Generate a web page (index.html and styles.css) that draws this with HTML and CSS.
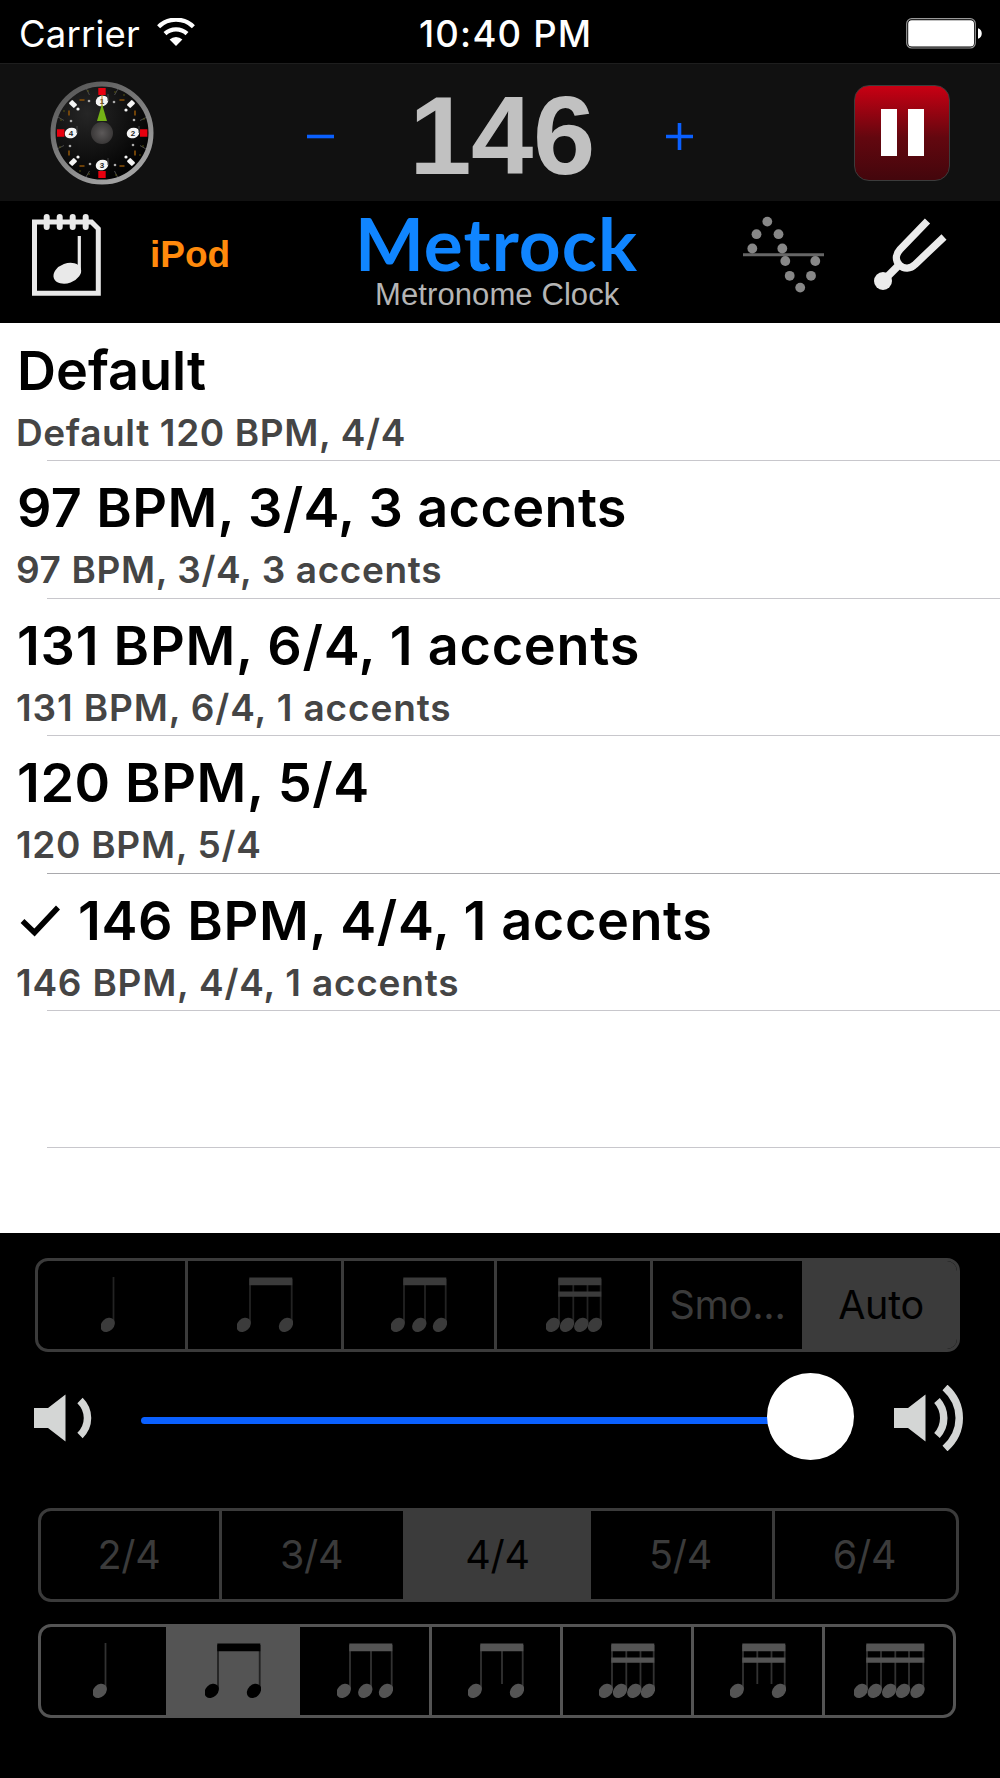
FILE: index.html
```html
<!DOCTYPE html>
<html lang="en">
<head>
    <meta charset="UTF-8">
    <meta name="viewport" content="width=device-width, initial-scale=1.0">
    <title>Metrock</title>
    <link rel="stylesheet" href="styles.css">
</head>
<body>
    <!-- shared note symbols -->
    <svg class="defs" width="0" height="0">
        <defs>
            <ellipse id="head" rx="8" ry="6.2" transform="rotate(-45)"/>
            <symbol id="note1" viewBox="0 0 14 56">
                <path class="stem" d="M12.5 0V46"/>
                <use href="#head" x="6.7" y="47.8"/>
            </symbol>
            <symbol id="note2" viewBox="0 0 56 56">
                <path class="stem" d="M13 2V46M54.7 2V46"/>
                <path d="M12.3 .5h43v7.8h-43z"/>
                <use href="#head" x="6.7" y="47.8"/><use href="#head" x="49" y="47.8"/>
            </symbol>
            <symbol id="note3" viewBox="0 0 56 56">
                <path class="stem" d="M13 2V46M34 2V46M54.7 2V46"/>
                <path d="M12.3 .5h43v7.8h-43z"/>
                <use href="#head" x="6.7" y="47.8"/><use href="#head" x="28.3" y="47.8"/><use href="#head" x="49" y="47.8"/>
            </symbol>
            <symbol id="note3rest" viewBox="0 0 56 56">
                <path class="stem" d="M13 2V46M34 2V41M54.7 2V46"/>
                <path d="M12.3 .5h43v7.8h-43z"/>
                <use href="#head" x="6.7" y="47.8"/><use href="#head" x="49" y="47.8"/>
            </symbol>
            <symbol id="note4" viewBox="0 0 56 56">
                <path class="stem" d="M13 2V46M27.3 2V46M41.5 2V46M54.7 2V46"/>
                <path d="M12.3 .5h43v7.8h-43zM12.3 14.6h43v5.2h-43z"/>
                <use href="#head" x="6.7" y="47.8"/><use href="#head" x="21" y="47.8"/><use href="#head" x="35.3" y="47.8"/><use href="#head" x="49" y="47.8"/>
            </symbol>
            <symbol id="note4rest" viewBox="0 0 56 56">
                <path class="stem" d="M13 2V46M27.3 2V41M41.5 2V41M54.7 2V46"/>
                <path d="M12.3 .5h43v7.8h-43zM12.3 14.6h43v5.2h-43z"/>
                <use href="#head" x="6.7" y="47.8"/><use href="#head" x="49" y="47.8"/>
            </symbol>
            <symbol id="note5" viewBox="0 0 71 56">
                <path class="stem" d="M13 2V46M27 2V46M41.3 2V46M55 2V46M69.3 2V46"/>
                <path d="M12.3 .5h58v7.8h-58zM12.3 14.6h58v5.2h-58z"/>
                <use href="#head" x="6.7" y="47.8"/><use href="#head" x="20.8" y="47.8"/><use href="#head" x="35.2" y="47.8"/><use href="#head" x="49" y="47.8"/><use href="#head" x="63.5" y="47.8"/>
            </symbol>
            <g id="minor">
                <path d="M12.5 -38l3.5 -6M-12.5 -38l-3 -6" stroke="#4a4a4a" stroke-width="1"/>
                <path d="M17.5 -33h5M-22.5 -33h5" stroke="#8a5208" stroke-width="1.6"/>
                <circle cx="12" cy="-31" r="1.3" fill="#aaa"/>
                <circle cx="-13" cy="-32" r="1.3" fill="#aaa"/>
                <circle cx="13" cy="-41" r=".8" fill="#5c5a10"/>
                <circle cx="-14" cy="-42" r=".8" fill="#5c5a10"/>
                <circle cx="22" cy="-38" r=".8" fill="#5c5a10"/>
            </g>
        </defs>
    </svg>

    <div class="status-bar">
        <span class="carrier">Carrier</span>
        <svg class="wifi" width="38" height="28" viewBox="0 0 38 28">
            <path d="M1.6 8.7a25 25 0 0 1 34.8 0M8 15.6a16.3 16.3 0 0 1 22 0" fill="none" stroke="#fff" stroke-width="4.3"/>
            <path d="M19 28l-6.4-6.4a9.2 9.2 0 0 1 12.8 0z" fill="#fff"/>
        </svg>
        <span class="time">10:40 PM</span>
        <svg class="battery" width="77" height="31" viewBox="0 0 77 31">
            <rect x=".7" y=".7" width="68.6" height="29.3" rx="5" fill="none" stroke="#999" stroke-width="1.2"/>
            <rect x="2.2" y="2.2" width="65.8" height="26.4" rx="3.5" fill="#fff"/>
            <path d="M72 10.3c5 1 5 9.4 0 10.4z" fill="#fff"/>
        </svg>
    </div>

    <div class="tempo-bar">
        <svg class="dial" width="104" height="104" viewBox="-52 -52 104 104">
            <defs>
                <linearGradient id="rim" x1="0" y1="0" x2=".6" y2="1">
                    <stop offset="0" stop-color="#505050"/><stop offset="1" stop-color="#a2a2a2"/>
                </linearGradient>
                <radialGradient id="face" cx=".35" cy=".3" r=".7">
                    <stop offset="0" stop-color="#262626"/><stop offset="1" stop-color="#020202"/>
                </radialGradient>
                <radialGradient id="hub">
                    <stop offset="0" stop-color="#5c5959"/><stop offset="1" stop-color="#3a3838"/>
                </radialGradient>
            </defs>
            <circle r="49" fill="url(#face)" stroke="url(#rim)" stroke-width="5"/>
            <use href="#minor"/><use href="#minor" transform="rotate(90)"/><use href="#minor" transform="rotate(180)"/><use href="#minor" transform="rotate(270)"/>
            <g fill="#f5f5f5">
                <rect x="-2.5" y="-3.6" width="5" height="7.2" rx="1" transform="translate(-29 -29) rotate(-45)"/>
                <rect x="-2.5" y="-3.6" width="5" height="7.2" rx="1" transform="translate(29 -29) rotate(45)"/>
                <rect x="-2.5" y="-3.6" width="5" height="7.2" rx="1" transform="translate(29 29) rotate(-45)"/>
                <rect x="-2.5" y="-3.6" width="5" height="7.2" rx="1" transform="translate(-29 29) rotate(45)"/>
                <circle cx="-24" cy="-24" r="1.6"/><circle cx="24" cy="-23" r="1.6"/><circle cx="24" cy="24" r="1.6"/><circle cx="-24" cy="24" r="1.6"/>
                <ellipse cx="0" cy="-32" rx="6.4" ry="5.2" transform="rotate(-20 0 -32)"/>
                <ellipse cx="31" cy="0" rx="6.4" ry="5.2" transform="rotate(-20 31 0)"/>
                <ellipse cx="0" cy="32" rx="6.4" ry="5.2" transform="rotate(-20 0 32)"/>
                <ellipse cx="-31" cy="0" rx="6.4" ry="5.2" transform="rotate(-20 -31 0)"/>
            </g>
            <path d="M6 -39v7M37 -7v7M6 25v7M-25 -7v7" stroke="#444" stroke-width="1"/>
            <g fill="#e8000f">
                <path d="M-3.7 -45h7.4v7h-7.4zM-3.7 38h7.4v7h-7.4zM-45 -3.7h7.4v7.4h-7.4zM38 -3.7h7.4v7.4h-7.4z"/>
            </g>
            <text class="dial-num" x="0" y="-29">1</text>
            <text class="dial-num" x="31" y="3">2</text>
            <text class="dial-num" x="0" y="35">3</text>
            <text class="dial-num" x="-31" y="3">4</text>
            <path d="M0 -38v12" stroke="#c9831c" stroke-width="1"/>
            <path d="M0 -29l5 17h-10z" fill="#74b216"/>
            <circle r="11" fill="url(#hub)"/>
        </svg>
        <svg class="step" width="27" height="27" viewBox="0 0 27 27"><path d="M0 13.5h27"/></svg>
        <span class="bpm">146</span>
        <svg class="step" width="27" height="27" viewBox="0 0 27 27"><path d="M0 13.5h27M13.5 0v27"/></svg>
        <div class="pause"><i></i><i></i></div>
    </div>

    <div class="nav-bar">
        <svg class="notebook" width="69" height="83" viewBox="0 0 69 83">
            <path d="M2.5 8h57l6.8 6.8V79.3H2.5z" fill="none" stroke="#e9e9e9" stroke-width="5"/>
            <path d="M14.7 3v10M27.7 3v10M40.7 3v10M53.7 3v10" stroke="#e9e9e9" stroke-width="6" stroke-linecap="round"/>
            <path d="M47.3 22v37" stroke="#e9e9e9" stroke-width="3.2"/>
            <ellipse cx="35.3" cy="59.3" rx="14.3" ry="9.8" transform="rotate(-20 35.3 59.3)" fill="#e9e9e9"/>
        </svg>
        <span class="ipod">iPod</span>
        <div class="brand">
            <div class="name">Metrock</div>
            <div class="tagline">Metronome Clock</div>
        </div>
        <svg class="wave" width="82" height="78" viewBox="0 0 82 78">
            <path d="M0 38.7h81" stroke="#666" stroke-width="3"/>
            <g fill="#878787">
                <circle cx="9.3" cy="32.5" r="4.9"/><circle cx="13.5" cy="18.2" r="4.9"/><circle cx="24.3" cy="5.6" r="4.9"/><circle cx="35.5" cy="18.2" r="4.9"/><circle cx="39.3" cy="32.5" r="4.9"/>
                <circle cx="42.3" cy="45" r="4.9"/><circle cx="46.7" cy="59.8" r="4.9"/><circle cx="57.2" cy="71.6" r="4.9"/><circle cx="68" cy="59.8" r="4.9"/><circle cx="72.3" cy="45" r="4.9"/>
            </g>
        </svg>
        <svg class="fork" width="76" height="76" viewBox="0 0 76 76">
            <path d="M54.5 4L27 32.5C22 38 22.5 44 26.5 48C31 52.5 37.5 52 42 47.5L71 20" fill="none" stroke="#ebebeb" stroke-width="7.3"/>
            <path d="M27 47L11 63" stroke="#ebebeb" stroke-width="7.5"/>
            <circle cx="10" cy="64" r="9" fill="#ebebeb"/>
        </svg>
    </div>

    <div class="presets">
        <div class="row">
            <div class="title t1">Default</div>
            <div class="detail d1">Default 120 BPM, 4/4</div>
        </div>
        <div class="row">
            <div class="title t2">97 BPM, 3/4, 3 accents</div>
            <div class="detail d2">97 BPM, 3/4, 3 accents</div>
        </div>
        <div class="row">
            <div class="title t3">131 BPM, 6/4, 1 accents</div>
            <div class="detail d3">131 BPM, 6/4, 1 accents</div>
        </div>
        <div class="row dark">
            <div class="title t4">120 BPM, 5/4</div>
            <div class="detail d4">120 BPM, 5/4</div>
        </div>
        <div class="row">
            <div class="title t5">
                <svg class="check" width="40" height="32" viewBox="0 0 40 32"><path d="M2.5 16L14.5 27.5L38 2.5" fill="none" stroke="#000" stroke-width="5.5"/></svg>
                <span>146 BPM, 4/4, 1 accents</span>
            </div>
            <div class="detail d5">146 BPM, 4/4, 1 accents</div>
        </div>
        <div class="row"></div>
    </div>

    <div class="panel">
        <div class="segments sound">
            <div class="seg first"><svg width="14" height="56"><use href="#note1"/></svg></div>
            <div class="seg"><svg width="56" height="56"><use href="#note2"/></svg></div>
            <div class="seg"><svg width="56" height="56"><use href="#note3"/></svg></div>
            <div class="seg"><svg width="56" height="56"><use href="#note4"/></svg></div>
            <div class="seg">Smo...</div>
            <div class="seg active">Auto</div>
        </div>

        <div class="volume">
            <svg class="speaker-low" width="60" height="66" viewBox="0 0 60 66">
                <path d="M0 23h14l17.5-13.5v47L14 43H0z" fill="#d4d6d5"/>
                <path d="M46 15.5c10 10 10 25 0 35" fill="none" stroke="#d4d6d5" stroke-width="7.5"/>
            </svg>
            <div class="slider"><div class="track"></div><div class="thumb"></div></div>
            <svg class="speaker-high" width="70" height="66" viewBox="0 0 70 66">
                <path d="M0 23h14l17.5-13.5v47L14 43H0z" fill="#d4d6d5"/>
                <path d="M43 15.5c9 10 9 25 0 35M51 2.5c19 17 19 44 0 61" fill="none" stroke="#d4d6d5" stroke-width="7.5"/>
            </svg>
        </div>

        <div class="segments meter">
            <div class="seg">2/4</div>
            <div class="seg">3/4</div>
            <div class="seg active">4/4</div>
            <div class="seg">5/4</div>
            <div class="seg">6/4</div>
        </div>

        <div class="segments rhythm">
            <div class="seg first"><svg width="14" height="56"><use href="#note1"/></svg></div>
            <div class="seg active"><svg width="56" height="56"><use href="#note2"/></svg></div>
            <div class="seg"><svg width="56" height="56"><use href="#note3"/></svg></div>
            <div class="seg"><svg width="56" height="56"><use href="#note3rest"/></svg></div>
            <div class="seg"><svg width="56" height="56"><use href="#note4"/></svg></div>
            <div class="seg"><svg width="56" height="56"><use href="#note4rest"/></svg></div>
            <div class="seg"><svg width="71" height="56"><use href="#note5"/></svg></div>
        </div>
    </div>
</body>
</html>
```
FILE: styles.css
```css
* {
    box-sizing: border-box;
}

body {
    margin: 0;
    width: 1000px;
    height: 1778px;
    overflow: hidden;
    background: #000;
    font-family: Inter, "Liberation Sans", sans-serif;
    white-space: nowrap;
}

svg {
    display: block;
    flex: none;
}

.defs {
    height: 0;
}

.status-bar {
    display: grid;
    grid-template-columns: 157px 262px 487px 77px;
    height: 63px;
    color: #fff;
    font-size: 36.5px;
    line-height: 68px;
}

.carrier {
    padding-left: 19px;
    letter-spacing: 0.2px;
}

.wifi, .battery {
    margin-top: 18px;
}

.time {
    font-weight: 500;
    letter-spacing: 1.2px;
}

.tempo-bar {
    display: grid;
    grid-template-columns: 307px 27px 332px 27px 307px;
    grid-template-rows: 137px;
    align-items: center;
    height: 138px;
    background: #111;
    border-top: 1px solid #1e1e1e;
}

.dial {
    margin-left: 49.5px;
}

.dial-num {
    font: bold 8px "Liberation Sans", sans-serif;
    text-anchor: middle;
    fill: #222;
}

.step {
    margin-top: 8px;
    stroke: #0a60ff;
    stroke-width: 3.6;
}

.bpm {
    padding: 7px 0 0 4px;
    color: #c1c1c1;
    font: bold 112px/138px "Liberation Sans", sans-serif;
    letter-spacing: -0.5px;
    text-align: center;
}

.pause {
    display: flex;
    justify-content: center;
    align-items: center;
    gap: 11px;
    justify-self: end;
    width: 96px;
    height: 96px;
    margin-right: 50px;
    border: 1px solid #3c3c3c;
    border-radius: 15px;
    background: linear-gradient(#c90013, #63070f 55%, #43060c);
}

.pause i {
    width: 16px;
    height: 47px;
    background: #fff;
}

.nav-bar {
    display: grid;
    grid-template-columns: 150px 205px 388px 130px 127px;
    height: 122px;
}

.notebook {
    margin: 13px 0 0 32px;
}

.ipod {
    color: #ff8a0c;
    font: bold 37px/107px "Liberation Sans", sans-serif;
}

.name {
    color: #1085ff;
    font: bold 73px/85px Lato, sans-serif;
    letter-spacing: 1px;
}

.tagline {
    padding-left: 20px;
    color: #b5b5b5;
    font: 31px/18px "Liberation Sans", sans-serif;
    letter-spacing: 0.1px;
}

.wave {
    margin-top: 15px;
}

.fork {
    margin-top: 16px;
}

.presets {
    height: 909.5px;
    padding: 1px 0 0 17px;
    background: #fff;
}

.row {
    height: 137.4px;
    background: linear-gradient(#c8c7cc, #c8c7cc) 30px 100% / 100% 1px no-repeat;
}

.row.dark {
    background-image: linear-gradient(#a9a9ad, #a9a9ad);
}

.title {
    display: flex;
    align-items: center;
    color: #000;
    font-size: 54px;
    font-weight: 600;
    line-height: 93px;
}

/* tracking per preset name */
.t2 { letter-spacing: 0.36px; }
.t3 { letter-spacing: 0.74px; }
.t4 { letter-spacing: 0.57px; }
.t5 { letter-spacing: 0.6px; }

.check {
    margin: 2px 18px 0 3px;
}

.detail {
    margin-left: -1px;
    color: #454545;
    font-size: 37px;
    font-weight: 600;
    line-height: 32px;
}

.d1 { letter-spacing: 0.63px; }
.d2 { letter-spacing: 0.62px; }
.d3 { letter-spacing: 0.88px; }
.d4 { letter-spacing: 0.7px; }
.d5 { letter-spacing: 0.78px; }

.panel {
    padding-top: 25px;
}

.segments {
    display: grid;
    height: 94px;
    border: 3px solid;
    border-radius: 13px;
    overflow: hidden;
}

.seg {
    display: flex;
    justify-content: center;
    align-items: center;
    font-size: 39.5px;
    letter-spacing: -0.3px;
}

.seg svg {
    fill: currentColor;
    overflow: visible;
}

.seg.first {
    padding-right: 8px;
}

.seg + .seg {
    border-left: 3px solid;
}

.stem {
    stroke: currentColor;
    stroke-width: 1.8;
    opacity: 0.6;
}

.sound, .meter {
    border-color: #3b3b3b;
    color: #3b3b3b;
}

.sound {
    grid-template-columns: 147px 156px 153px 156px 152px 1fr;
    width: 925px;
    margin-left: 35px;
}

.meter {
    grid-template-columns: 178px 184px 188px 181px 1fr;
    width: 921px;
    margin-left: 38px;
}

.meter .seg {
    padding-right: 2px;
}

.rhythm {
    grid-template-columns: 125px 134px 129px 131px 131px 131px 1fr;
    width: 918px;
    margin: 22px 0 0 38px;
    border-color: #545454;
    color: #545454;
}

.sound .active, .meter .active {
    background: #3b3b3b;
    border-color: #3b3b3b;
    color: #000;
}

.rhythm .active {
    padding-right: 3px;
    background: #545454;
    border-color: #545454;
    color: #000;
}

.seg.active + .seg {
    border-left: none;
}

.volume {
    display: grid;
    grid-template-columns: 141px 753px 1fr;
    align-items: center;
    height: 156px;
    padding-bottom: 23px;
}

.speaker-low {
    margin-left: 34px;
}

.slider {
    display: flex;
    align-items: center;
    margin-top: -3px;
}

.track {
    width: 630px;
    height: 7px;
    margin-top: 7px;
    border-radius: 4px;
    background: #0a60ff;
}

.thumb {
    width: 87px;
    height: 87px;
    margin-left: -4px;
    border-radius: 50%;
    background: #fff;
}
```
